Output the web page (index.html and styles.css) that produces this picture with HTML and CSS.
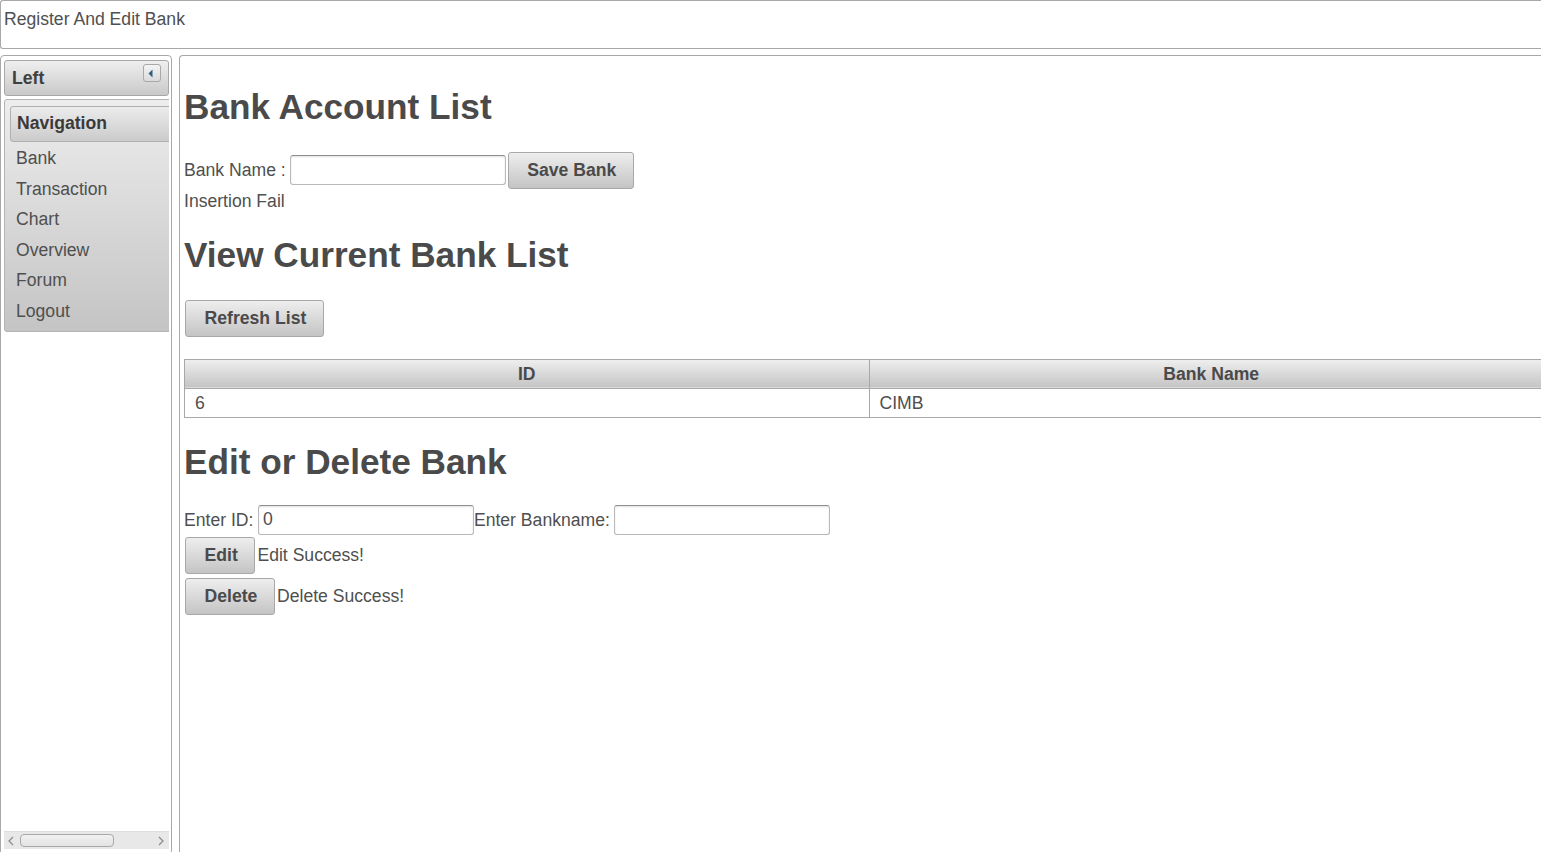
FILE: index.html
```html
<!DOCTYPE html>
<html lang="en">
<head>
<meta charset="utf-8">
<title>Register And Edit Bank</title>
<link rel="stylesheet" href="styles.css">
</head>
<body>
<div class="top">Register And Edit Bank</div>
<div class="layout">
  <aside class="west">
    <div class="west-head">
      <span class="west-title">Left</span>
      <span class="toggle"><svg width="16" height="16" viewBox="0 0 16 16"><polygon points="4.5,8.5 8.5,4.5 8.5,12.5" fill="#2f5f80"/></svg></span>
    </div>
    <div class="west-body">
      <div class="menu">
        <div class="menu-head">Navigation</div>
        <ul class="menu-list">
          <li>Bank</li>
          <li>Transaction</li>
          <li>Chart</li>
          <li>Overview</li>
          <li>Forum</li>
          <li>Logout</li>
        </ul>
      </div>
    </div>
    <div class="hscroll">
      <svg class="arr-l" width="6" height="10" viewBox="0 0 6 10"><polyline points="5,1 1,5 5,9" fill="none" stroke="#8a8a8a" stroke-width="1.2"/></svg>
      <span class="thumb"></span>
      <span class="track-fill"></span>
      <svg class="arr-r" width="6" height="10" viewBox="0 0 6 10"><polyline points="1,1 5,5 1,9" fill="none" stroke="#8a8a8a" stroke-width="1.2"/></svg>
    </div>
  </aside>
  <main class="center">
    <h1 class="title t1">Bank Account List</h1>
    <div class="row row-save">
      <span class="lbl lbl-bank">Bank Name :</span>
      <input class="field" type="text" value="">
      <button class="btn btn-save">Save Bank</button>
    </div>
    <div class="msg">Insertion Fail</div>
    <h2 class="title t2">View Current Bank List</h2>
    <div class="row row-refresh">
      <button class="btn">Refresh List</button>
    </div>
    <table class="grid">
      <thead>
        <tr><th>ID</th><th>Bank Name</th></tr>
      </thead>
      <tbody>
        <tr><td>6</td><td>CIMB</td></tr>
      </tbody>
    </table>
    <h2 class="title t3">Edit or Delete Bank</h2>
    <div class="row row-edit-fields">
      <span class="lbl lbl-id">Enter ID:</span>
      <input class="field" type="text" value="0">
      <span class="lbl lbl-name">Enter Bankname:</span>
      <input class="field" type="text" value="">
    </div>
    <div class="row row-edit">
      <button class="btn">Edit</button>
      <span class="status">Edit Success!</span>
    </div>
    <div class="row row-delete">
      <button class="btn">Delete</button>
      <span class="status">Delete Success!</span>
    </div>
  </main>
</div>
</body>
</html>
```
FILE: styles.css
```css
html, body {
  margin: 0;
  padding: 0;
  background: #ffffff;
  overflow: hidden;
}
body {
  font-family: "Liberation Sans", Arial, sans-serif;
  font-size: 17.6px;
  color: #4f4f4f;
  line-height: 20px;
}

.top {
  box-sizing: border-box;
  height: 49px;
  border: 1px solid #a8a8a8;
  border-right: 0;
  border-radius: 3px 0 0 3px;
  padding: 8px 0 0 3px;
  line-height: 20px;
}

.layout {
  display: flex;
  gap: 7px;
  margin-top: 6px;
  height: 800px;
}

/* ---------- west panel ---------- */
.west {
  box-sizing: border-box;
  width: 172px;
  flex: none;
  border: 1px solid #a8a8a8;
  border-radius: 4px;
  padding: 4px 2px 0 3px;
  display: flex;
  flex-direction: column;
}
.west-head {
  box-sizing: border-box;
  height: 36px;
  border: 1px solid #a8a8a8;
  border-radius: 3px;
  background: linear-gradient(#efefef, #c9c9c9);
  display: flex;
  justify-content: space-between;
  align-items: flex-start;
  padding: 3px 7px 0 7px;
}
.west-title {
  font-weight: bold;
  color: #3f3f3f;
  padding-top: 4px;
}
.toggle {
  width: 16px;
  height: 16px;
  border: 1px solid #a8a8a8;
  border-radius: 3px;
  background: linear-gradient(#f4f4f4, #dadada);
  display: flex;
}
.west-body {
  flex: 1;
  overflow: hidden;
  margin-top: 3px;
}
.menu {
  width: 200px;
  box-sizing: border-box;
  border: 1px solid #b4b4b4;
  border-radius: 3px;
  background: linear-gradient(#ededed, #c4c4c4);
  padding: 6px 0 4px 5px;
}
.menu-head {
  box-sizing: border-box;
  height: 36px;
  border: 1px solid #b0b0b0;
  border-radius: 3px 0 0 3px;
  background: linear-gradient(#ececec, #cbcbcb);
  font-weight: bold;
  color: #3a3a3a;
  padding: 6px 6px 0 6px;
}
.menu-list {
  list-style: none;
  margin: 0;
  padding: 1px 0 0 0;
}
.menu-list li {
  padding: 5px 5px 5px 6px;
  line-height: 20.6px;
}

.hscroll {
  box-sizing: border-box;
  height: 18px;
  margin-bottom: 5px;
  background: #e8e8e8;
  border-top: 1px solid #dedede;
  display: flex;
  align-items: center;
}
.arr-l {
  margin-left: 4px;
}
.thumb {
  box-sizing: border-box;
  width: 94px;
  height: 13px;
  margin-left: 6px;
  border: 1px solid #a8a8a8;
  border-radius: 4px;
  background: linear-gradient(#f2f2f2, #e2e2e2);
}
.track-fill {
  flex: 1;
}
.arr-r {
  margin-right: 5px;
}

/* ---------- center panel ---------- */
.center {
  flex: 1;
  min-width: 0;
  overflow: hidden;
  border-top: 1px solid #a8a8a8;
  border-left: 1px solid #a8a8a8;
  border-top-left-radius: 4px;
  padding-left: 4px;
}
.title {
  font-size: 35.2px;
  line-height: 40px;
  font-weight: bold;
  color: #4a4a4a;
  margin: 0;
}
.t1 { margin-top: 30.8px; }
.t2 { margin-top: 23.3px; }
.t3 { margin-top: 23.8px; }

.row {
  display: flex;
  align-items: center;
}
.row-save { margin-top: 25.2px; height: 37px; }
.row-refresh { margin-top: 24.7px; }
.row-edit-fields { margin-top: 23px; height: 30px; }
.row-edit { margin-top: 2px; }
.row-delete { margin-top: 4px; }

.lbl-bank { margin-right: 4px; }
.lbl-id { margin-right: 4.5px; }
.lbl-name { margin-right: 4.5px; }

.msg {
  line-height: 21px;
  margin-top: 2px;
}

.field {
  box-sizing: border-box;
  width: 216px;
  height: 30px;
  margin: 0;
  padding: 0 4px;
  border: 1px solid #b9b9b9;
  border-top-color: #8e8e8e;
  border-radius: 3px;
  box-shadow: inset 0 1px 2px rgba(0, 0, 0, 0.12);
  background: #ffffff;
  font-family: "Liberation Sans", Arial, sans-serif;
  font-size: 17.6px;
  color: #4f4f4f;
  outline: none;
}

.btn {
  box-sizing: border-box;
  height: 37px;
  margin: 0 0 0 1px;
  padding: 0 16.6px 0 18.6px;
  border: 1px solid #a8a8a8;
  border-radius: 3px;
  background: linear-gradient(#eeeeee, #c4c4c4);
  font-family: "Liberation Sans", Arial, sans-serif;
  font-size: 17.6px;
  font-weight: bold;
  color: #4a4a4a;
  line-height: 20px;
}
.btn-save { margin-left: 2px; }

.status {
  margin-left: 2px;
}

.grid {
  width: 1370px;
  margin-top: 22px;
  border-collapse: collapse;
  table-layout: fixed;
}
.grid th,
.grid td {
  border: 1px solid #a8a8a8;
  height: 28px;
  padding: 0 10px;
  box-sizing: content-box;
  line-height: 20px;
}
.grid th {
  background: linear-gradient(#efefef, #c4c4c4);
  font-weight: bold;
  color: #4a4a4a;
  text-align: center;
}
.grid td {
  text-align: left;
  color: #4f4f4f;
}
```
